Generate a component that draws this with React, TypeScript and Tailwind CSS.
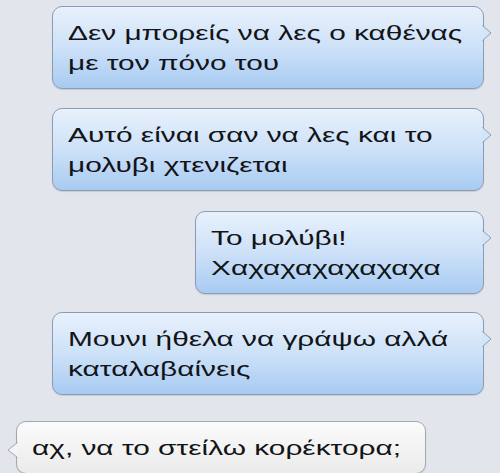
import React from 'react';

type Msg = { side: 'me' | 'them'; lines: string[]; width: string; gap: string };

// the source screenshot is stretched sideways, so the text is widened to match
const messages: Msg[] = [
    { side: 'me', lines: ['Δεν μπορείς να λες ο καθένας', 'με τον πόνο του'], width: 'w-[432px]', gap: 'mt-[6px]' },
    { side: 'me', lines: ['Αυτό είναι σαν να λες και το', 'μολυβι χτενιζεται'], width: 'w-[432px]', gap: 'mt-[19px]' },
    { side: 'me', lines: ['Το μολύβι!', 'Χαχαχαχαχαχαχα'], width: 'w-[289px]', gap: 'mt-[20px]' },
    { side: 'me', lines: ['Μουνι ήθελα να γράψω αλλά', 'καταλαβαίνεις'], width: 'w-[432px]', gap: 'mt-[18px]' },
    { side: 'them', lines: ['αχ, να το στείλω κορέκτορα;'], width: 'w-[410px]', gap: 'mt-[26px]' },
];

const TailRight = () => (
    <svg className="absolute right-[-9px] top-[18px]" width="10" height="16" viewBox="0 0 10 16">
        <path d="M0 0 L9 8 L0 16 Z" fill="#d3e5f9" />
        <path d="M0.5 0.5 L9 8 L0.5 15.5" fill="none" stroke="#8a9db4" strokeWidth="1" />
    </svg>
);

const TailLeft = () => (
    <svg className="absolute left-[-10px] top-[20px]" width="11" height="16" viewBox="0 0 11 16">
        <path d="M11 0 L1 8 L11 16 Z" fill="#f4f4f4" />
        <path d="M10.5 0.5 L1 8 L10.5 15.5" fill="none" stroke="#a3a7ad" strokeWidth="1" />
    </svg>
);

export default function App() {
    return (
        <div
            className="w-[500px] h-[473px] overflow-hidden bg-[#e2e6ec] flex flex-col"
            style={{ fontFamily: '"Liberation Sans", Arial, sans-serif' }}
        >
            {messages.map((m, i) => (
                <div key={i} className={`flex ${m.gap} ${m.side === 'me' ? 'justify-end pr-[16px]' : 'justify-start pl-[16px]'}`}>
                    <div
                        className={`relative ${m.width} rounded-[10px] border px-[15px] pt-[11px] pb-[10px] text-[21px] leading-[30px] text-[#121417] shadow-[0_1px_1px_rgba(0,0,0,0.12)] whitespace-nowrap ${
                            m.side === 'me'
                                ? 'border-[#8a9db4] bg-linear-to-b from-[#e8f1fc] via-[#cde1f8] to-[#a8cbf2]'
                                : 'border-[#a3a7ad] bg-linear-to-b from-[#fbfbfb] to-[#ebebeb]'
                        }`}
                    >
                        <div className="origin-left scale-x-[1.42]">
                            {m.lines.map((l, j) => (
                                <div key={j}>{l}</div>
                            ))}
                        </div>
                        {m.side === 'me' ? <TailRight /> : <TailLeft />}
                    </div>
                </div>
            ))}
        </div>
    );
}
